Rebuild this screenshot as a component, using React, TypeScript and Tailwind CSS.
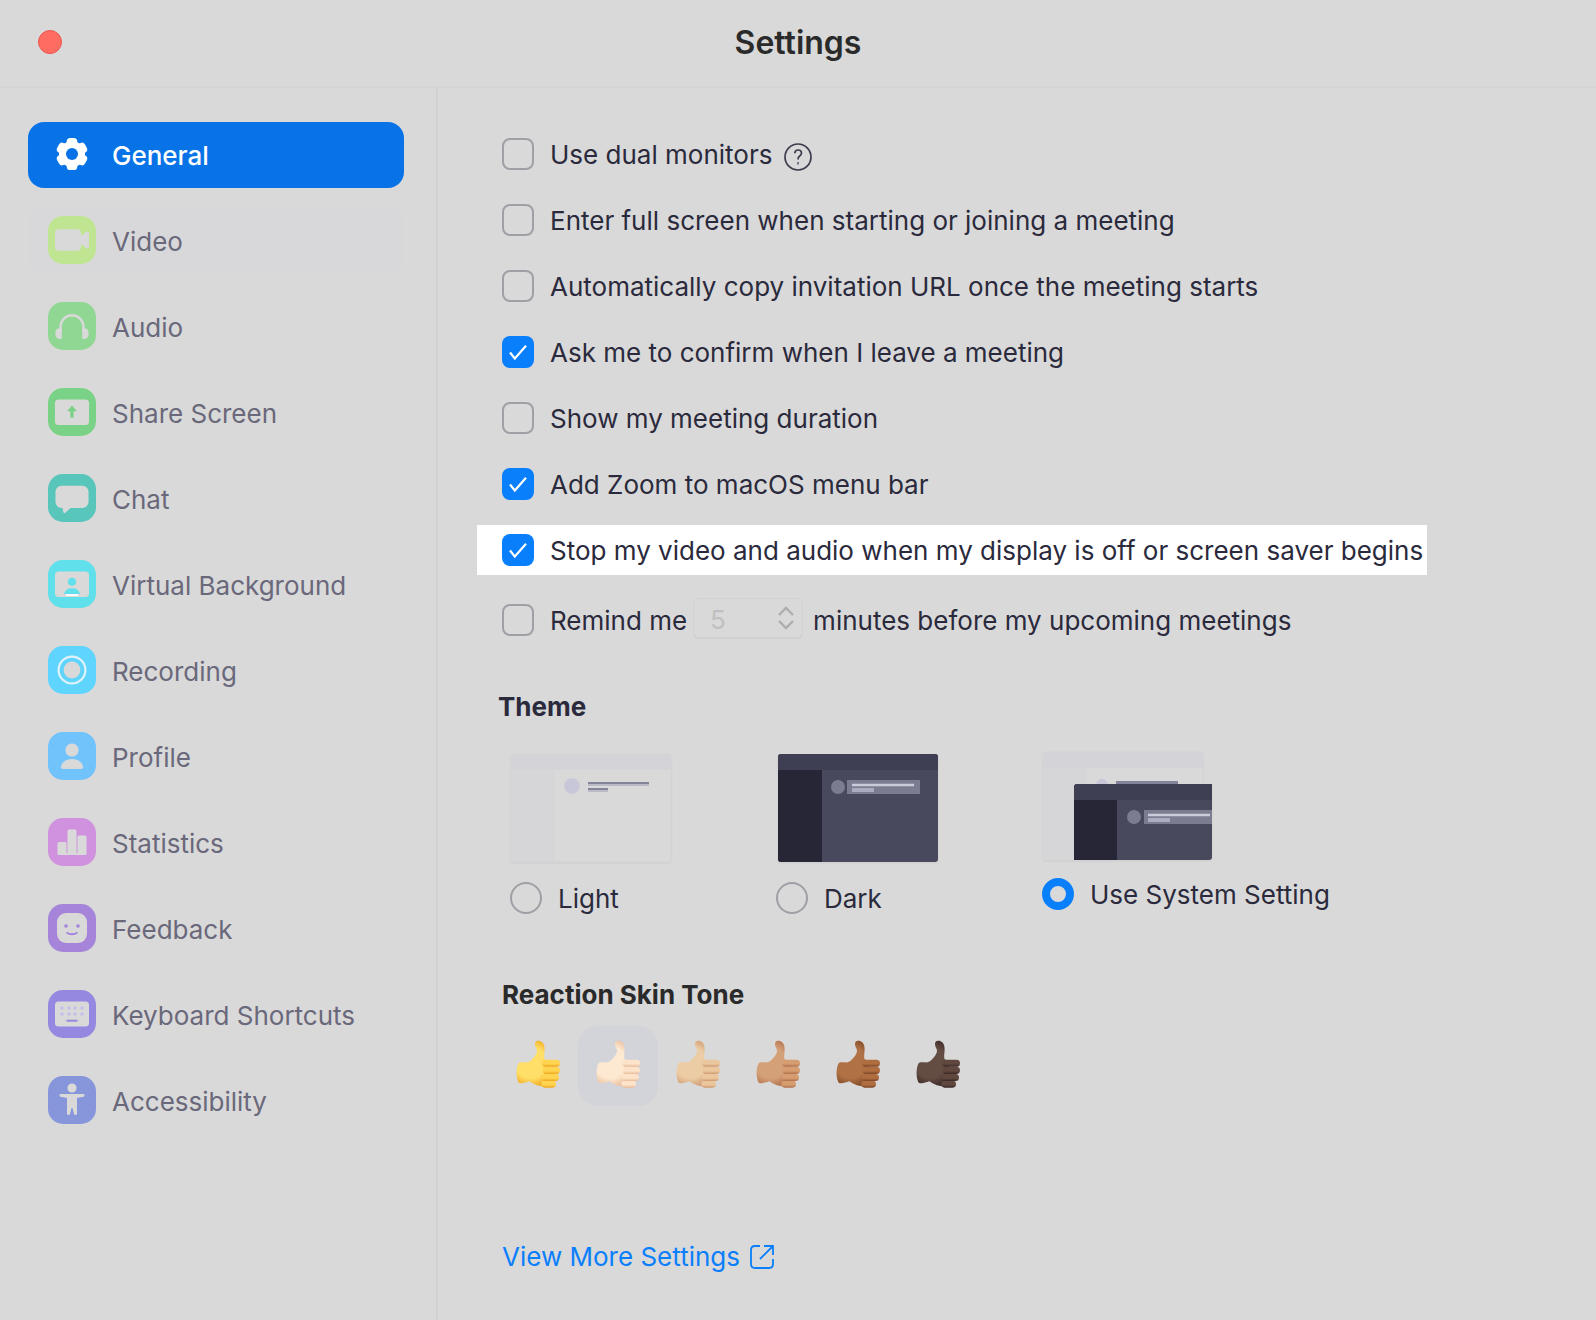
import React, { useState } from "react";

const PAPER = "#d9d9d9";

function Tile({ color, children }: { color: string; children: React.ReactNode }) {
  return (
    <svg viewBox="0 0 48 48" className="size-12 shrink-0" aria-hidden="true">
      <rect width="48" height="48" rx="15" fill={color} />
      {children}
    </svg>
  );
}

const GearIcon = (
  <svg viewBox="0 0 48 48" className="size-12 shrink-0" aria-hidden="true">
    <g fill="#fff">
      <circle cx="24" cy="24" r="13" />
      <rect x="18.7" y="8" width="10.6" height="32" rx="3.6" />
      <rect x="18.7" y="8" width="10.6" height="32" rx="3.6" transform="rotate(60 24 24)" />
      <rect x="18.7" y="8" width="10.6" height="32" rx="3.6" transform="rotate(120 24 24)" />
    </g>
    <circle cx="24" cy="24" r="6" fill="#0873e7" />
  </svg>
);

const VideoIcon = (
  <Tile color="#c0e592">
    <rect x="7" y="13.3" width="26" height="21.4" rx="4" fill={PAPER} />
    <path d="M32 20.5 38.5 15.8Q41 15.2 41 17.5V30.5Q41 32.8 38.5 32.2L32 27.5Z" fill={PAPER} />
  </Tile>
);

const AudioIcon = (
  <Tile color="#91d794">
    <path d="M12.6 29V24.6a11.4 11.4 0 0 1 22.8 0V29" fill="none" stroke={PAPER} strokeWidth="2.4" />
    <path d="M13.8 26.2V37H12a4.6 4.6 0 0 1-4.6-4.6v-2A4.6 4.6 0 0 1 12 26.2ZM34.2 26.2V37H36a4.6 4.6 0 0 0 4.6-4.6v-2a4.6 4.6 0 0 0-4.6-4.2Z" fill={PAPER} />
  </Tile>
);

const ShareIcon = (
  <Tile color="#7ad287">
    <rect x="7" y="11.5" width="34" height="25.5" rx="3.5" fill={PAPER} />
    <path d="M24 17.8 28.4 23H25.3V29.6H22.7V23H19.6Z" fill="#7ad287" stroke="#7ad287" strokeWidth="0.6" strokeLinejoin="round" />
  </Tile>
);

const ChatIcon = (
  <Tile color="#58c6bb">
    <path d="M13.5 11.8H34.5A6 6 0 0 1 40.5 17.8V28A6 6 0 0 1 34.5 34H22.5L17 39Q15.6 39.6 15.3 38L14.5 34H13.5A6 6 0 0 1 7.5 28V17.8A6 6 0 0 1 13.5 11.8Z" fill={PAPER} />
  </Tile>
);

const VirtualIcon = (
  <Tile color="#5fe0ea">
    <rect x="7" y="11.5" width="34" height="25.5" rx="3.5" fill={PAPER} />
    <circle cx="24" cy="21.8" r="4" fill="#5fe0ea" />
    <path d="M16 34Q17.5 28.3 24 28.3T32 34Z" fill="#5fe0ea" />
    <path d="M18 35H30" stroke="#fff" strokeWidth="1.8" />
  </Tile>
);

const RecordIcon = (
  <Tile color="#5fd5fd">
    <circle cx="24" cy="24" r="13.4" fill="none" stroke="#dff2fa" strokeWidth="2.2" />
    <circle cx="24" cy="24" r="8.4" fill={PAPER} />
  </Tile>
);

const ProfileIcon = (
  <Tile color="#71c3fc">
    <circle cx="24" cy="18" r="6.6" fill={PAPER} />
    <path d="M15 37Q12.5 37 13 34.5C14 29.5 19 27 24 27S34 29.5 35 34.5Q35.5 37 33 37Z" fill={PAPER} />
  </Tile>
);

const StatsIcon = (
  <Tile color="#d092de">
    <rect x="9.5" y="24" width="9" height="13" rx="1.5" fill={PAPER} />
    <rect x="19.5" y="11.5" width="9" height="25" rx="1.5" fill={PAPER} />
    <rect x="29.5" y="17.5" width="9" height="19.5" rx="1.5" fill={PAPER} />
    <path d="M10 36H38" stroke={PAPER} strokeWidth="2" />
  </Tile>
);

const FeedbackIcon = (
  <Tile color="#a684da">
    <rect x="9" y="9" width="30" height="30" rx="9" fill={PAPER} />
    <circle cx="18" cy="22" r="1.8" fill="#a684da" />
    <circle cx="30" cy="22" r="1.8" fill="#a684da" />
    <path d="M18.5 28.5Q24 32 29.5 28.5" fill="none" stroke="#a684da" strokeWidth="1.8" />
  </Tile>
);

const KeyboardIcon = (
  <Tile color="#9488e0">
    <rect x="7" y="11.5" width="34" height="25" rx="3.5" fill={PAPER} />
    <g fill="#c4bfe8">
      {[14, 21, 27, 34].map((x) => (
        <g key={x}>
          <circle cx={x} cy="18" r="1.7" />
          <circle cx={x} cy="24" r="1.7" />
        </g>
      ))}
    </g>
    <path d="M18.5 30.7H29.5" stroke="#9488e0" strokeWidth="2" />
  </Tile>
);

const AccessIcon = (
  <Tile color="#8795db">
    <circle cx="24" cy="12" r="4.6" fill={PAPER} />
    <path d="M12.5 18H35.5Q36.5 18 36.5 19.3T35.5 20.8L29 22V37.5Q29 39 27.5 39T26 38L24.5 32H23.5L22 38Q21.8 39 20.4 39T19 37.5V22L12.5 20.8Q11.5 20.6 11.5 19.3T12.5 18Z" fill={PAPER} />
  </Tile>
);

const NAV = [
  { label: "General", icon: GearIcon },
  { label: "Video", icon: VideoIcon },
  { label: "Audio", icon: AudioIcon },
  { label: "Share Screen", icon: ShareIcon },
  { label: "Chat", icon: ChatIcon },
  { label: "Virtual Background", icon: VirtualIcon },
  { label: "Recording", icon: RecordIcon },
  { label: "Profile", icon: ProfileIcon },
  { label: "Statistics", icon: StatsIcon },
  { label: "Feedback", icon: FeedbackIcon },
  { label: "Keyboard Shortcuts", icon: KeyboardIcon },
  { label: "Accessibility", icon: AccessIcon },
];

function Check({ defaultChecked = false }: { defaultChecked?: boolean }) {
  return (
    <span className="relative size-8 shrink-0">
      <input
        type="checkbox"
        defaultChecked={defaultChecked}
        className="peer block size-8 appearance-none rounded-lg border-2 border-[#9f9fa5] checked:border-0 checked:bg-[#0a7ffb]"
      />
      <svg viewBox="0 0 32 32" className="pointer-events-none absolute inset-0 hidden size-8 peer-checked:block" aria-hidden="true">
        <path d="M8 16.5 12.8 22.5 24 9.8" fill="none" stroke="#fff" strokeWidth="2.2" />
      </svg>
    </span>
  );
}

const OPTIONS = [
  { label: "Use dual monitors", on: false, help: true },
  { label: "Enter full screen when starting or joining a meeting", on: false },
  { label: "Automatically copy invitation URL once the meeting starts", on: false },
  { label: "Ask me to confirm when I leave a meeting", on: true },
  { label: "Show my meeting duration", on: false },
  { label: "Add Zoom to macOS menu bar", on: true },
  { label: "Stop my video and audio when my display is off or screen saver begins", on: true, highlight: true },
];

function HelpIcon() {
  return (
    <svg viewBox="0 0 28 28" className="size-7" aria-hidden="true" fill="none" stroke="#3c3c4c" strokeWidth="1.7">
      <circle cx="14" cy="14" r="13" />
      <path d="M10.8 10.2Q11 7 14.2 7T17.5 10Q17.5 11.8 15.7 13T14 16.5" />
      <path d="M14 19V21.5" stroke="#77778a" strokeWidth="2" />
    </svg>
  );
}

function LightWindow() {
  return (
    <g>
      <rect x="1" y="1" width="160" height="108" rx="3" fill="#d9d9da" stroke="#d5d5d7" strokeWidth="0.6" />
      <rect x="1" y="16" width="44" height="93" fill="#d6d6d9" />
      <path d="M1 17V4Q1 1 4 1H158Q161 1 161 4V17Z" fill="#d4d4d8" />
    </g>
  );
}

function LightThumb() {
  return (
    <svg viewBox="0 0 172 112" className="h-28 w-[172px] drop-shadow-xs" aria-hidden="true">
      <LightWindow />
      <circle cx="62" cy="33" r="7.8" fill="#c8c7d9" />
      <path d="M78 30.2H139M78 36.2H98" stroke="#83839a" strokeWidth="2.2" />
      <path d="M78 32.2H139M78 38.2H98" stroke="#b9b9c8" strokeWidth="1.8" />
    </svg>
  );
}

function DarkThumb() {
  return (
    <svg viewBox="0 0 172 112" className="h-28 w-[172px] drop-shadow-xs" aria-hidden="true">
      <rect x="2" y="1" width="160" height="108" rx="3" fill="#49495d" />
      <path d="M2 17H46V109H5Q2 109 2 106Z" fill="#272636" />
      <path d="M2 17V4Q2 1 5 1H159Q162 1 162 4V17Z" fill="#3f3f54" />
      <circle cx="62" cy="34" r="7" fill="#7c7c90" />
      <rect x="71" y="27" width="73" height="14" fill="#7c7c90" />
      <path d="M76 32H138" stroke="#cbcbdc" strokeWidth="2.4" />
      <path d="M76 37H98" stroke="#acacc1" strokeWidth="4" />
    </svg>
  );
}

function SystemThumb() {
  return (
    <svg viewBox="0 0 172 112" className="h-28 w-[172px] drop-shadow-xs" aria-hidden="true">
      <LightWindow />
      <circle cx="60" cy="34" r="6" fill="#c8c7d9" />
      <path d="M74 31.5H136" stroke="#83839a" strokeWidth="3" />
      <path d="M32 36Q32 33 35 33H170V106Q170 109 167 109H32Z" fill="#49495d" />
      <path d="M32 49H75V109H32Z" fill="#272636" />
      <path d="M32 49V36Q32 33 35 33H170V49Z" fill="#3f3f54" />
      <circle cx="92" cy="66" r="7" fill="#7c7c90" />
      <rect x="102" y="59" width="68" height="14" fill="#7c7c90" />
      <path d="M106 64H168" stroke="#cbcbdc" strokeWidth="2.4" />
      <path d="M106 69H128" stroke="#acacc1" strokeWidth="4" />
    </svg>
  );
}

const THEMES = [
  { label: "Light", art: <LightThumb /> },
  { label: "Dark", art: <DarkThumb /> },
  { label: "Use System Setting", art: <SystemThumb />, on: true },
];

type Tone = { name: string; base: string; finger: string; edge: string };

const TONES: Tone[] = [
  { name: "Default", base: "#ffdf67", finger: "#ffd451", edge: "#f0a51c" },
  { name: "Light", base: "#fde9d1", finger: "#fce3ca", edge: "#e9bb98" },
  { name: "Medium light", base: "#ebcca4", finger: "#ebc79d", edge: "#cf9870" },
  { name: "Medium", base: "#d4a077", finger: "#d59d70", edge: "#b06f4c" },
  { name: "Medium dark", base: "#b07245", finger: "#b06d40", edge: "#7b4524" },
  { name: "Dark", base: "#634c42", finger: "#60483e", edge: "#382625" },
];

function Thumb({ tone, id }: { tone: Tone; id: string }) {
  return (
    <svg viewBox="0 0 240 240" className="size-20" aria-hidden="true">
      <defs>
        <radialGradient id={id} gradientUnits="userSpaceOnUse" cx="98" cy="110" r="78">
          <stop offset="0.6" stopColor={tone.base} />
          <stop offset="1" stopColor={tone.edge} />
        </radialGradient>
        <linearGradient id={id + "f"} x1="0" y1="0" x2="0" y2="1">
          <stop offset="0.6" stopColor={tone.finger} />
          <stop offset="1" stopColor={tone.edge} />
        </linearGradient>
      </defs>
      <path
        d="M120 44C129 43 137 50 139 60C142 74 137 86 139 98L152 108V180C138 184 112 180 94 166C82 170 70 174 62 170C53 154 54 122 63 110C72 107 82 110 90 109C101 103 111 92 116 80C120 68 111 66 111 53C111 47 115 44 120 44Z"
        fill={"url(#" + id + ")"}
      />
      <g fill={"url(#" + id + "f)"}>
        <rect x="130" y="164" width="44" height="21" rx="10" />
        <rect x="132" y="144" width="51" height="21" rx="10.5" />
        <rect x="134" y="122" width="52" height="22" rx="11" />
        <rect x="132" y="101" width="54" height="21" rx="10.5" />
      </g>
    </svg>
  );
}

export default function App() {
  const [section, setSection] = useState("General");
  const [tone, setTone] = useState("Light");

  return (
    <div className="flex min-h-screen flex-col bg-[#d9d9d9] font-['Inter',sans-serif] text-[26px] leading-8 text-[#2a2a3c]">
      <header className="grid h-[88px] grid-cols-[1fr_auto_1fr] items-center border-b-2 border-[#d4d4d6] px-[38px] pb-0.5">
        <button type="button" aria-label="Close" className="size-6 rounded-full border border-[#e9564d] bg-[#ff6c61]" />
        <h1 className="pt-0.5 text-[32px] leading-10 font-semibold text-[#2a2a2a]">Settings</h1>
      </header>

      <div className="flex flex-1">
        <aside className="w-[438px] shrink-0 border-r-2 border-[#d2d2d4] pt-[34px] pr-8 pl-7">
          <nav className="flex flex-col gap-5">
            {NAV.map(({ label, icon }) => (
              <button
                key={label}
                type="button"
                onClick={() => setSection(label)}
                aria-current={section === label ? "page" : undefined}
                className={
                  section === label
                    ? "flex h-[66px] items-center gap-4 rounded-2xl bg-[#0873e7] px-5 pb-0.5 text-left font-medium text-white"
                    : label === "Video"
                      ? "flex h-[66px] items-center gap-4 rounded-2xl bg-[#d8d8da] px-5 pb-0.5 text-left text-[#6a687b]"
                      : "flex h-[66px] items-center gap-4 rounded-2xl px-5 pb-0.5 text-left text-[#6a687b]"
                }
              >
                {icon}
                <span className="pt-1">{label}</span>
              </button>
            ))}
          </nav>
        </aside>

        <main className="min-w-0 flex-1 pt-[41px] pb-11 pl-[39px]">
          <div className="flex flex-col items-start gap-4">
            {OPTIONS.map(({ label, on, help, highlight }) => (
              <div
                key={label}
                className={highlight ? "flex h-[50px] items-center bg-white pr-1 pl-[25px]" : "flex h-[50px] items-center pr-1 pl-[25px]"}
              >
                <label className="flex items-center gap-4">
                  <Check defaultChecked={on} />
                  <span className="pt-0.5">{label}</span>
                </label>
                {help && (
                  <button type="button" aria-label="About dual monitors" className="ml-3 pt-1.5">
                    <HelpIcon />
                  </button>
                )}
              </div>
            ))}
          </div>

          <div className="mt-5 flex h-[50px] items-center pl-[25px]">
            <label className="flex items-center gap-4">
              <Check />
              <span className="pt-0.5">Remind me</span>
            </label>
            <div className="mr-2.5 mb-1 ml-1.5 flex h-10 w-[110px] items-center rounded-md border border-[#d2d2d2] pr-2 pl-4 shadow-2xs">
              <input
                type="text"
                inputMode="numeric"
                aria-label="Minutes"
                defaultValue="5"
                disabled
                className="min-w-0 flex-1 bg-transparent pt-1 text-[#c0c0c0]"
              />
              <span className="flex flex-col gap-1 text-[#adadad]">
                <button type="button" disabled aria-label="More minutes">
                  <svg viewBox="0 0 16 10" className="h-2.5 w-4" fill="none" stroke="currentColor" strokeWidth="2.4" aria-hidden="true">
                    <path d="M1 9 8 2 15 9" />
                  </svg>
                </button>
                <button type="button" disabled aria-label="Fewer minutes">
                  <svg viewBox="0 0 16 10" className="h-2.5 w-4" fill="none" stroke="currentColor" strokeWidth="2.4" aria-hidden="true">
                    <path d="M1 1 8 8 15 1" />
                  </svg>
                </button>
              </span>
            </div>
            <span className="pt-0.5">minutes before my upcoming meetings</span>
          </div>

          <fieldset className="mt-[46px]">
            <legend className="pl-[21px] font-bold">Theme</legend>
            <div className="mt-7 flex pl-[33px]">
              {THEMES.map(({ label, art, on }) => (
                <label key={label} className={on ? "flex w-72 flex-col gap-3.5" : "flex w-[266px] flex-col gap-4 pt-0.5"}>
                  {art}
                  <span className="flex items-center gap-4">
                    <input
                      type="radio"
                      name="theme"
                      defaultChecked={on}
                      className="size-8 shrink-0 appearance-none rounded-full border-2 border-[#9f9fa5] checked:border-8 checked:border-[#0a7ffb]"
                    />
                    <span className="pt-0.5 whitespace-nowrap">{label}</span>
                  </span>
                </label>
              ))}
            </div>
          </fieldset>

          <section className="mt-16">
            <h2 className="pl-[25px] font-bold text-[#2a2a2a]">Reaction Skin Tone</h2>
            <div className="mt-[15px] flex pl-[21px]">
              {TONES.map((t, i) => (
                <button
                  key={t.name}
                  type="button"
                  aria-label={t.name + " skin tone"}
                  aria-pressed={tone === t.name}
                  onClick={() => setTone(t.name)}
                  className={tone === t.name ? "size-20 rounded-[20px] bg-[#d3d3da]" : "size-20 rounded-[20px]"}
                >
                  <Thumb tone={t} id={"tone" + i} />
                </button>
              ))}
            </div>
          </section>

          <a href="#more" className="mt-[135px] ml-[25px] inline-flex items-center gap-2.5 text-[#0a7ffb]">
            View More Settings
            <svg viewBox="0 0 24 24" className="size-6" fill="none" stroke="currentColor" strokeWidth="1.8" aria-hidden="true">
              <path d="M10 1H5Q1 1 1 5V19Q1 23 5 23H19Q23 23 23 19V14" />
              <path d="M14 1H23V10M23 1 10 14" />
            </svg>
          </a>
        </main>
      </div>
    </div>
  );
}
